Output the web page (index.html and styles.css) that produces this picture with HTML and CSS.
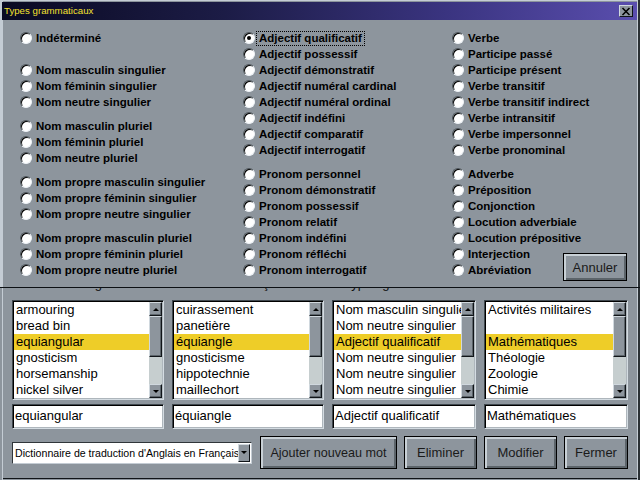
FILE: index.html
```html
<!DOCTYPE html>
<html lang="fr">
<head>
<meta charset="utf-8">
<title>Dictionnaire</title>
<link rel="stylesheet" href="styles.css">
</head>
<body>
<div class="screen">
  <div class="main">
    <div class="spacer"></div>
    <div class="cols headers">
      <div>Mot Anglais</div>
      <div>Mot Français</div>
      <div>Types grammaticaux</div>
      <div>Connotations</div>
    </div>
    <div class="cols lists">
      <div class="listbox">
        <div class="items">
          <div class="item">armouring</div>
          <div class="item">bread bin</div>
          <div class="item sel">equiangular</div>
          <div class="item">gnosticism</div>
          <div class="item">horsemanship</div>
          <div class="item">nickel silver</div>
        </div>
        <div class="sb"><div class="sb-btn"><span class="up"></span></div><div class="thumb"></div><div class="track"></div><div class="sb-btn"><span class="down"></span></div></div>
      </div>
      <div class="listbox">
        <div class="items">
          <div class="item">cuirassement</div>
          <div class="item">panetière</div>
          <div class="item sel">équiangle</div>
          <div class="item">gnosticisme</div>
          <div class="item">hippotechnie</div>
          <div class="item">maillechort</div>
        </div>
        <div class="sb"><div class="sb-btn"><span class="up"></span></div><div class="thumb"></div><div class="track"></div><div class="sb-btn"><span class="down"></span></div></div>
      </div>
      <div class="listbox">
        <div class="items">
          <div class="item">Nom masculin singulier</div>
          <div class="item">Nom neutre singulier</div>
          <div class="item sel">Adjectif qualificatif</div>
          <div class="item">Nom neutre singulier</div>
          <div class="item">Nom neutre singulier</div>
          <div class="item">Nom neutre singulier</div>
        </div>
        <div class="sb"><div class="sb-btn"><span class="up"></span></div><div class="thumb"></div><div class="track"></div><div class="sb-btn"><span class="down"></span></div></div>
      </div>
      <div class="listbox">
        <div class="items">
          <div class="item">Activités militaires</div>
          <div class="item"></div>
          <div class="item sel">Mathématiques</div>
          <div class="item">Théologie</div>
          <div class="item">Zoologie</div>
          <div class="item">Chimie</div>
        </div>
        <div class="sb"><div class="sb-btn"><span class="up"></span></div><div class="thumb"></div><div class="track"></div><div class="sb-btn"><span class="down"></span></div></div>
      </div>
    </div>
    <div class="cols inputs">
      <div class="field">equiangular</div>
      <div class="field">équiangle</div>
      <div class="field">Adjectif qualificatif</div>
      <div class="field">Mathématiques</div>
    </div>
    <div class="actions">
      <div class="select"><span class="sel-text">Dictionnaire de traduction d'Anglais en Français</span><span class="sel-btn"><span class="down"></span></span></div>
      <div class="btn b-add">Ajouter nouveau mot</div>
      <div class="btn b-elim">Eliminer</div>
      <div class="btn b-mod">Modifier</div>
      <div class="btn b-close">Fermer</div>
    </div>
  </div>

  <div class="dialog">
    <div class="titlebar">
      <span class="title">Types grammaticaux</span>
      <span class="xbtn"><svg width="10" height="9" viewBox="0 0 10 9"><path d="M1.5 1 L8.5 8 M8.5 1 L1.5 8" stroke="#000" stroke-width="1.6" fill="none"/></svg></span>
    </div>
    <div class="dbody">
      <div class="col">
        <div class="group">
          <div class="radio"><span class="dot"></span><span>Indéterminé</span></div>
        </div>
        <div class="group g16">
          <div class="radio"><span class="dot"></span><span>Nom masculin singulier</span></div>
          <div class="radio"><span class="dot"></span><span>Nom féminin singulier</span></div>
          <div class="radio"><span class="dot"></span><span>Nom neutre singulier</span></div>
        </div>
        <div class="group">
          <div class="radio"><span class="dot"></span><span>Nom masculin pluriel</span></div>
          <div class="radio"><span class="dot"></span><span>Nom féminin pluriel</span></div>
          <div class="radio"><span class="dot"></span><span>Nom neutre pluriel</span></div>
        </div>
        <div class="group">
          <div class="radio"><span class="dot"></span><span>Nom propre masculin singulier</span></div>
          <div class="radio"><span class="dot"></span><span>Nom propre féminin singulier</span></div>
          <div class="radio"><span class="dot"></span><span>Nom propre neutre singulier</span></div>
        </div>
        <div class="group">
          <div class="radio"><span class="dot"></span><span>Nom propre masculin pluriel</span></div>
          <div class="radio"><span class="dot"></span><span>Nom propre féminin pluriel</span></div>
          <div class="radio"><span class="dot"></span><span>Nom propre neutre pluriel</span></div>
        </div>
      </div>
      <div class="col">
        <div class="group">
          <div class="radio"><span class="dot on"></span><span class="focus">Adjectif qualificatif</span></div>
          <div class="radio"><span class="dot"></span><span>Adjectif possessif</span></div>
          <div class="radio"><span class="dot"></span><span>Adjectif démonstratif</span></div>
          <div class="radio"><span class="dot"></span><span>Adjectif numéral cardinal</span></div>
          <div class="radio"><span class="dot"></span><span>Adjectif numéral ordinal</span></div>
          <div class="radio"><span class="dot"></span><span>Adjectif indéfini</span></div>
          <div class="radio"><span class="dot"></span><span>Adjectif comparatif</span></div>
          <div class="radio"><span class="dot"></span><span>Adjectif interrogatif</span></div>
        </div>
        <div class="group">
          <div class="radio"><span class="dot"></span><span>Pronom personnel</span></div>
          <div class="radio"><span class="dot"></span><span>Pronom démonstratif</span></div>
          <div class="radio"><span class="dot"></span><span>Pronom possessif</span></div>
          <div class="radio"><span class="dot"></span><span>Pronom relatif</span></div>
          <div class="radio"><span class="dot"></span><span>Pronom indéfini</span></div>
          <div class="radio"><span class="dot"></span><span>Pronom réfléchi</span></div>
          <div class="radio"><span class="dot"></span><span>Pronom interrogatif</span></div>
        </div>
      </div>
      <div class="col">
        <div class="group">
          <div class="radio"><span class="dot"></span><span>Verbe</span></div>
          <div class="radio"><span class="dot"></span><span>Participe passé</span></div>
          <div class="radio"><span class="dot"></span><span>Participe présent</span></div>
          <div class="radio"><span class="dot"></span><span>Verbe transitif</span></div>
          <div class="radio"><span class="dot"></span><span>Verbe transitif indirect</span></div>
          <div class="radio"><span class="dot"></span><span>Verbe intransitif</span></div>
          <div class="radio"><span class="dot"></span><span>Verbe impersonnel</span></div>
          <div class="radio"><span class="dot"></span><span>Verbe pronominal</span></div>
        </div>
        <div class="group">
          <div class="radio"><span class="dot"></span><span>Adverbe</span></div>
          <div class="radio"><span class="dot"></span><span>Préposition</span></div>
          <div class="radio"><span class="dot"></span><span>Conjonction</span></div>
          <div class="radio"><span class="dot"></span><span>Locution adverbiale</span></div>
          <div class="radio"><span class="dot"></span><span>Locution prépositive</span></div>
          <div class="radio"><span class="dot"></span><span>Interjection</span></div>
          <div class="radio"><span class="dot"></span><span>Abréviation</span></div>
        </div>
      </div>
      <div class="col-btn">
        <div class="btn b-cancel">Annuler</div>
      </div>
    </div>
  </div>
</div>
</body>
</html>
```
FILE: styles.css
```css
* { box-sizing: border-box; }
html, body { margin: 0; padding: 0; }
body {
  width: 640px; height: 480px; overflow: hidden;
  background: #8d959d;
  font-family: "Liberation Sans", Arial, sans-serif;
  color: #000;
}
.screen { position: relative; width: 640px; height: 480px; }

/* main window */
.main {
  width: 640px; height: 480px;
  padding: 0 12px;
  display: flex; flex-direction: column;
  box-shadow: inset 2px 0 0 #8d959d, inset 3px 0 0 #c4ccd4,
              inset -2px 0 0 #2a3034, inset -3px 0 0 #c4ccd4,
              inset 0 -1px 0 #8d959d, inset 0 -2px 0 #101418;
}
.spacer { height: 276px; flex: none; }
.cols { display: grid; grid-template-columns: 152px 152px 144px 144px; column-gap: 8px; }
.headers { height: 16px; font-size: 13px; line-height: 16px; text-align: center; color: #101010; }
.lists { margin-top: 8px; height: 100px; }
.listbox {
  display: flex; height: 100px; background: #fff;
  border: 1px solid; border-color: #40484e #d4dce2 #d4dce2 #40484e;
  box-shadow: inset 1px 1px 0 #000, inset -1px -1px 0 #aeb6bc;
  padding: 1px;
  overflow: hidden;
}
.items { flex: 1; min-width: 0; overflow: hidden; }
.item {
  height: 16px; line-height: 16px; font-size: 13px;
  padding-left: 2px; white-space: nowrap; overflow: hidden;
}
.item.sel { background: #eecd28; }
.sb { width: 13px; flex: none; display: flex; flex-direction: column; background: #c6cecf; }
.sb-btn, .thumb {
  background: #8d959d;
  border: 1px solid; border-color: #d0d8de #101418 #101418 #d0d8de;
  box-shadow: inset -1px -1px 0 #5c646a;
}
.sb-btn { height: 14px; display: flex; align-items: center; justify-content: center; }
.thumb { height: 41px; }
.track { flex: 1; }
.up { width: 0; height: 0; border-left: 3px solid transparent; border-right: 3px solid transparent; border-bottom: 3px solid #000; }
.down { width: 0; height: 0; border-left: 3px solid transparent; border-right: 3px solid transparent; border-top: 3px solid #000; }

.inputs { margin-top: 4px; height: 25px; }
.field {
  height: 25px; background: #fff; font-size: 13px; line-height: 21px;
  padding-left: 2px; white-space: nowrap; overflow: hidden;
  border: 1px solid; border-color: #40484e #d4dce2 #d4dce2 #40484e;
  box-shadow: inset 1px 1px 0 #000, inset -1px -1px 0 #aeb6bc;
}

.actions { margin-top: 7px; height: 33px; display: flex; align-items: center; gap: 7px; }
.select {
  width: 240px; height: 22px; margin-right: 1px; flex: none;
  display: flex; align-items: stretch; background: #fff;
  border: 1px solid; border-color: #30363a #c4ccd4 #c4ccd4 #30363a;
  padding: 1px;
}
.sel-text { flex: 1; min-width: 0; overflow: hidden; white-space: nowrap; font-size: 10.6px; line-height: 18px; padding-left: 1px; }
.sel-btn {
  width: 12px; flex: none; display: flex; align-items: center; justify-content: center;
  background: #8d959d; border: 1px solid; border-color: #d0d8de #101418 #101418 #d0d8de;
}
.btn {
  height: 33px; flex: none;
  display: flex; align-items: center; justify-content: center;
  background: #8d959d; color: #1a1a1a;
  font-size: 12.6px; white-space: nowrap;
  border: 1px solid #000;
  box-shadow: inset 2px 2px 0 #c8d0d6, inset -2px -2px 0 #5c646a;
}
.b-add { width: 137px; }
.b-elim { width: 73px; font-size: 13px; }
.b-mod { width: 73px; font-size: 13px; }
.b-close { width: 64px; font-size: 13px; }

/* dialog overlay */
.dialog {
  position: absolute; top: 0; left: 0;
  width: 640px; height: 288px;
  background: #8d959d;
  display: flex; flex-direction: column;
  padding: 2px 3px 0 2px;
  border-bottom: 1px solid #0c1014;
  box-shadow: inset 3px 0 0 #c4ccd4, inset 2px 0 0 #8d959d,
              inset -2px 0 0 #2a3034, inset -3px 0 0 #c4ccd4,
              inset 0 1px 0 #c4ccd4;
}
.titlebar {
  height: 18px; flex: none;
  display: flex; align-items: center; justify-content: space-between;
  background: linear-gradient(to right, #0a0a22 0%, #1c1c46 35%, #3a3480 70%, #5a4eae 100%);
  padding: 0 4px 0 2px;
}
.title { color: #f4e030; font-size: 9.7px; line-height: 12px; }
.xbtn {
  width: 14px; height: 12px;
  display: flex; align-items: center; justify-content: center;
  background: #8d959d;
  border: 1px solid; border-color: #d0d8de #101418 #101418 #d0d8de;
}
.dbody {
  flex: 1;
  display: grid;
  grid-template-columns: 223px 209px 111px 64px;
  padding: 10px 10px 6px 18px;
  align-items: start;
}
.col { display: flex; flex-direction: column; }
.group + .group { margin-top: 8px; }
.group.g16 { margin-top: 16px; }
.radio {
  display: flex; align-items: center;
  height: 16px; white-space: nowrap;
  font-weight: bold; font-size: 11.5px; color: #000;
}
.dot {
  position: relative;
  width: 12px; height: 12px; flex: none;
  border-radius: 50%; background: #fff;
  border: 1px solid; border-color: #4a5258 #eef2f6 #eef2f6 #4a5258;
  box-shadow: inset 1px 1px 0 #000;
  margin-right: 4px;
}
.dot.on::after {
  content: ""; position: absolute; left: 3px; top: 3px;
  width: 4px; height: 4px; border-radius: 50%; background: #000;
}
.focus { outline: 1px dotted #000; padding: 0 2px; margin-left: -2px; line-height: 13px; }
.col-btn { align-self: end; }
.b-cancel { width: 64px; height: 28px; font-size: 13px; }
```
